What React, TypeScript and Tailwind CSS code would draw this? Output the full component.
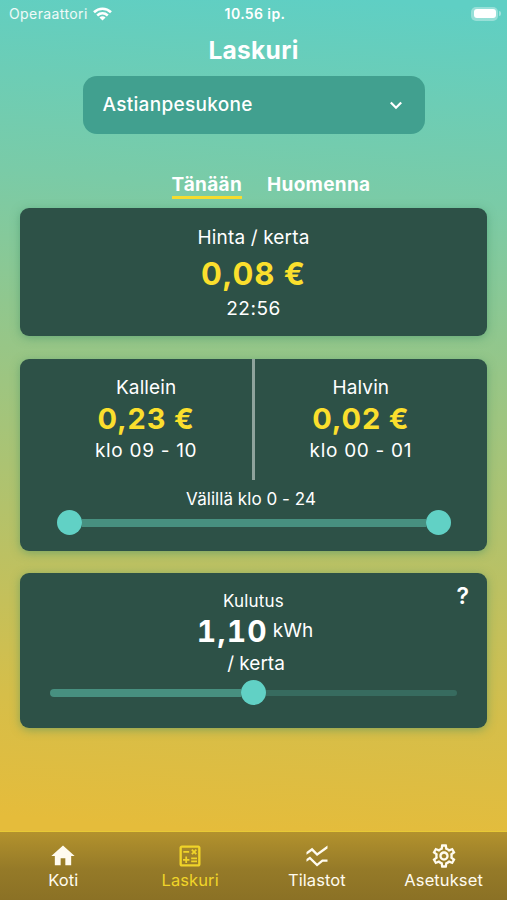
import type { ReactNode } from 'react';
import { clsx } from 'clsx';
import { MdHome, MdOutlineCalculate, MdOutlineSettings, MdSsidChart } from 'react-icons/md';

function StatusBar() {
  return (
    <div className="grid h-[27px] grid-cols-3 items-center pl-[9px] pr-[6px] text-[14px]">
      <div className="flex items-center gap-[5px] tracking-[0.4px] text-white/90">
        Operaattori
        <svg className="h-[14px] w-[19px] shrink-0" viewBox="0 0 19 14" fill="none" stroke="white" strokeWidth="2.6">
          <path d="M1 5.2C5.8 0.6 13.2 0.6 18 5.2" />
          <path d="M4.2 8.5C7.3 5.7 11.7 5.7 14.8 8.5" />
          <path d="M9.5 13.6L6.4 10.5C8.2 8.9 10.8 8.9 12.6 10.5Z" fill="white" stroke="none" />
        </svg>
      </div>
      <p className="text-center text-[14px] font-semibold tracking-[0.4px]">10.56 ip.</p>
      <div className="flex items-center justify-end gap-px">
        <div className="h-[14px] w-[27px] rounded-[5px] bg-white/35 p-[2.5px]">
          <div className="h-full w-full rounded-[3px] bg-white" />
        </div>
        <div className="h-[5px] w-[2px] rounded-r-full bg-white/40" />
      </div>
    </div>
  );
}

function Card({ className, children }: { className?: string; children: ReactNode }) {
  return (
    <section
      className={clsx(
        'relative mx-5 rounded-[9px] bg-[#2d5147] text-center shadow-[0_2px_10px_rgba(60,140,100,0.5)]',
        className,
      )}
    >
      {children}
    </section>
  );
}

function PriceColumn({ className, label, price, hours }: { className: string; label: string; price: string; hours: string }) {
  return (
    <div className={clsx('flex-1 pt-[16px]', className)}>
      <p className="text-[19px] leading-[25px] tracking-[0.1px]">{label}</p>
      <p className="text-[29px] leading-[38px] font-bold tracking-[0.9px] text-[#fbdf2d]">{price}</p>
      <p className="text-[19px] leading-[26px] tracking-[0.7px]">{hours}</p>
    </div>
  );
}

function Thumb() {
  return <div className="h-[25px] w-[25px] shrink-0 rounded-full bg-[#61d1c5]" />;
}

const tabs = [
  { label: 'Koti', icon: MdHome },
  { label: 'Laskuri', icon: MdOutlineCalculate, active: true },
  { label: 'Tilastot', icon: MdSsidChart },
  { label: 'Asetukset', icon: MdOutlineSettings },
];

function TabBar() {
  return (
    <nav className="grid h-[69px] grid-cols-4 border-t border-[#e8c935] bg-linear-to-b from-[#b3922d] via-[#957a28] via-55% to-[#8b7125]">
      {tabs.map(({ label, icon: Icon, active }) => (
        <div
          key={label}
          className={clsx('flex flex-col items-center pt-[10px]', active ? 'text-[#f0d429]' : 'text-[#fffbef]')}
        >
          <Icon className="h-[28px] w-[28px]" />
          <span className="text-[16.5px] leading-[20px] tracking-[0.1px]">{label}</span>
        </div>
      ))}
    </nav>
  );
}

export default function App() {
  return (
    <div className="flex h-[900px] w-[507px] flex-col overflow-hidden bg-[linear-gradient(184deg,#5fcfc4_1%,#7acba7_22%,#90c78e_36%,#b3c26b_58%,#d6be49_78%,#e5bc3b_91%)] font-[Inter,sans-serif] text-white">
      <StatusBar />
      <h1 className="mt-[7px] text-center text-[24.5px] leading-8 font-bold tracking-[0.3px]">Laskuri</h1>

      <button className="mx-auto mt-[10px] flex h-[58px] w-[342px] items-center justify-between rounded-[14px] bg-[#41a08f] pr-[22px] pl-5 text-[19px] font-medium tracking-[0.3px]">
        Astianpesukone
        <svg className="h-[9px] w-[14px]" viewBox="0 0 14 9" fill="none" stroke="white" strokeWidth="2.2">
          <path d="M1.8 1.5L7 6.8L12.2 1.5" />
        </svg>
      </button>

      <div className="mt-[40px] flex h-[34px] items-start justify-center gap-[25px] pl-[35px] text-[19px] leading-[22px] font-bold tracking-[0.3px]">
        <span className="h-[25px] border-b-3 border-[#f5dc2e]">Tänään</span>
        <span>Huomenna</span>
      </div>

      <Card className="h-[128px] pt-[17px]">
        <p className="text-[19px] leading-[26px] tracking-[0.15px]">Hinta / kerta</p>
        <p className="text-[31px] leading-[45px] font-bold tracking-[1px] text-[#fbdf2d]">0,08 €</p>
        <p className="text-[19px] leading-[25px] tracking-[0.5px]">22:56</p>
      </Card>

      <Card className="mt-[23px] h-[192px]">
        <div className="flex h-[121px]">
          <PriceColumn className="pl-5" label="Kallein" price="0,23 €" hours="klo 09 - 10" />
          <div className="w-[2.5px] bg-[#8ea39c]" />
          <PriceColumn className="pr-5" label="Halvin" price="0,02 €" hours="klo 00 - 01" />
        </div>
        <p className="mt-[8px] pr-[5px] text-[17px] leading-[22px] tracking-[0.05px]">Välillä klo 0 - 24</p>
        <div className="mr-[36px] ml-[37px] flex items-center">
          <Thumb />
          <div className="h-[8px] flex-1 bg-[#479080]" />
          <Thumb />
        </div>
      </Card>

      <Card className="mt-[22px] h-[155px] pt-[17px]">
        <span className="absolute top-[9px] right-[18px] text-[23px] leading-[28px] font-semibold">?</span>
        <p className="text-[17px] leading-[22px] tracking-[0.2px]">Kulutus</p>
        <div className="flex h-[38px] items-center justify-center gap-[5px] pl-[3px]">
          <span className="text-[30px] font-bold tracking-[1.2px] tabular-nums">1,10</span>
          <span className="text-[19px]">kWh</span>
        </div>
        <p className="pt-px pl-[5px] text-[19px] leading-[26px]">/ kerta</p>
        <div className="mx-[30px] mt-[3px] flex items-center">
          <div className="h-[8px] flex-1 rounded-l-full bg-[#479080]" />
          <Thumb />
          <div className="h-[6px] flex-1 rounded-r-full bg-[#376b5f]" />
        </div>
      </Card>

      <div className="flex-1" />
      <TabBar />
    </div>
  );
}
